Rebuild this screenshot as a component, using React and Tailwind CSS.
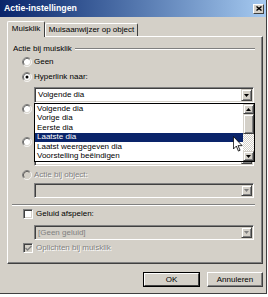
import React from 'react';

// Klassiek Windows-dialoogje "Actie-instellingen" met open keuzelijst

const Radio = ({ checked, disabled }) => (
  <svg width="10" height="10" viewBox="0 0 12 12" className="shrink-0">
    <circle cx="6" cy="6" r="4.5" fill={disabled ? '#d4d0c8' : '#fff'} />
    <path d="M9.89 2.11 A5.5 5.5 0 0 0 2.11 9.89" stroke="#808080" fill="none" />
    <path d="M9.89 2.11 A5.5 5.5 0 0 1 2.11 9.89" stroke="#fff" fill="none" />
    <path d="M9.18 2.82 A4.5 4.5 0 0 0 2.82 9.18" stroke="#404040" fill="none" />
    <path d="M9.18 2.82 A4.5 4.5 0 0 1 2.82 9.18" stroke="#d4d0c8" fill="none" />
    {checked && <circle cx="6" cy="6" r="1.8" fill="#000" />}
  </svg>
);

const Check = ({ checked, disabled }) => (
  <div
    className={`w-[10px] h-[10px] shrink-0 border-t border-l border-t-[#808080] border-l-[#808080] border-r border-b border-r-white border-b-white shadow-[inset_1px_1px_#404040,inset_-1px_-1px_#d4d0c8] flex items-center justify-center ${
      disabled ? 'bg-[#d4d0c8]' : 'bg-white'
    }`}
  >
    {checked && (
      <svg width="7" height="7" viewBox="0 0 7 7">
        <path d="M0.5 3 L2.5 5 L6.5 1" stroke={disabled ? '#808080' : '#000'} strokeWidth="1.4" fill="none" />
      </svg>
    )}
  </div>
);

const ArrowBtn = ({ up, disabled, noArrow }) => (
  <div className="w-[11px] h-full shrink-0 bg-[#d4d0c8] border-t border-l border-t-[#d4d0c8] border-l-[#d4d0c8] border-r border-b border-r-[#404040] border-b-[#404040] shadow-[inset_1px_1px_#fff,inset_-1px_-1px_#808080] flex items-center justify-center">
    {!noArrow && (
      <svg width="5" height="3" viewBox="0 0 5 3">
        <path d={up ? 'M0 3 L5 3 L2.5 0 Z' : 'M0 0 L5 0 L2.5 3 Z'} fill={disabled ? '#808080' : '#000'} />
      </svg>
    )}
  </div>
);

const Combo = ({ text, disabled, h = 'h-[16px]' }) => (
  <div
    className={`ml-[26px] w-[220px] ${h} shrink-0 flex p-[1px] border-t border-l border-t-[#808080] border-l-[#808080] border-r border-b border-r-white border-b-white shadow-[inset_1px_1px_#404040,inset_-1px_-1px_#d4d0c8] ${
      disabled ? 'bg-[#d4d0c8]' : 'bg-white'
    }`}
  >
    <div className={`flex-1 flex items-center pl-[2px] leading-none ${disabled ? 'text-[#808080]' : 'text-black'}`}>{text}</div>
    <ArrowBtn disabled={disabled} />
  </div>
);

const Etch = ({ className }) => (
  <div className={`h-[2px] border-t border-t-[#808080] border-b border-b-white ${className}`} />
);

const Option = ({ label, checked, disabled }) => (
  <div className="h-[10px] shrink-0 flex items-center pl-[14px] gap-[2px]">
    <Radio checked={checked} disabled={disabled} />
    {label && (
      <span className={`leading-none ${disabled ? 'text-[#808080] [text-shadow:1px_1px_0_#fff]' : ''}`}>{label}</span>
    )}
  </div>
);

const items = ['Volgende dia', 'Vorige dia', 'Eerste dia', 'Laatste dia', 'Laatst weergegeven dia', 'Voorstelling beëindigen'];

export default function App() {
  return (
    <div className="w-[268px] h-[297px] bg-white overflow-hidden font-['Liberation_Sans',Arial,sans-serif] text-[8px] text-black">
      <div className="w-[267px] h-[294px] bg-[#d4d0c8] border-r border-b border-r-[#404040] border-b-[#404040] flex flex-col">
        {/* titelbalk */}
        <div className="h-[17px] shrink-0 flex items-center justify-between pl-[4px] pr-[2px] bg-gradient-to-r from-[#0a246a] to-[#a6caf0]">
          <span className="text-white font-bold text-[8.75px] leading-none">Actie-instellingen</span>
          <div className="w-[11px] h-[10px] bg-[#d4d0c8] border-t border-l border-t-white border-l-white border-r border-b border-r-[#404040] border-b-[#404040] flex items-center justify-center">
            <svg width="6" height="5" viewBox="0 0 6 5">
              <path d="M0.5 0.5 L5.5 4.5 M5.5 0.5 L0.5 4.5" stroke="#000" strokeWidth="1.4" />
            </svg>
          </div>
        </div>

        {/* tabbladen */}
        <div className="mt-[4px] h-[15px] shrink-0 flex items-end ml-[7px]">
          <div className="relative z-10 -mb-[1px] h-[16px] w-[38px] bg-[#d4d0c8] border-t border-l border-t-white border-l-white border-r border-r-[#404040] rounded-t-[2px] flex items-center justify-center pb-[2px]">
            <span className="leading-none">Muisklik</span>
          </div>
          <div className="h-[13px] w-[93px] border-t border-l border-t-white border-l-white border-r border-r-[#404040] rounded-t-[2px] flex items-center justify-center">
            <span className="leading-none">Muisaanwijzer op object</span>
          </div>
        </div>

        {/* paneel */}
        <div className="relative ml-[7px] w-[256px] h-[228px] shrink-0 flex flex-col border-t border-l border-t-white border-l-white border-r border-b border-r-[#404040] border-b-[#404040] shadow-[inset_-1px_-1px_#808080]">
          <div className="mt-[7px] h-[10px] shrink-0 flex items-center pl-[5px] pr-[7px] gap-[3px]">
            <span className="leading-none">Actie bij muisklik</span>
            <Etch className="flex-1" />
          </div>
          <div className="mt-[3px]"><Option label="Geen" /></div>
          <div className="mt-[5px]"><Option label="Hyperlink naar:" checked /></div>
          <div className="mt-[5px]"><Combo text="Volgende dia" /></div>
          <div className="mt-[1px]"><Option /></div>
          <div className="mt-[4px] ml-[26px] w-[220px] h-[15px] flex gap-[4px]">
            <div className="flex-1 bg-white border-t border-l border-t-[#808080] border-l-[#808080]" />
            <div className="w-[50px] border-t border-l border-t-white border-l-white border-r border-b border-r-[#404040] border-b-[#404040]" />
          </div>
          <div className="mt-[4px]"><Option /></div>
          <div className="mt-[3px]"><Combo text="" /></div>
          <div className="mt-[4px]"><Option label="Actie bij object:" disabled /></div>
          <div className="mt-[3px]"><Combo text="" disabled h="h-[15px]" /></div>
          <Etch className="mt-[6px] ml-[4px] mr-[7px]" />
          <div className="mt-[3px] h-[10px] shrink-0 flex items-center pl-[15px] gap-[3px]">
            <Check />
            <span className="leading-none">Geluid afspelen:</span>
          </div>
          <div className="mt-[6px]"><Combo text="[Geen geluid]" disabled h="h-[15px]" /></div>
          <div className="mt-[3px] h-[10px] shrink-0 flex items-center pl-[15px] gap-[3px]">
            <Check checked disabled />
            <span className="leading-none text-[#808080] [text-shadow:1px_1px_0_#fff]">Oplichten bij muisklik</span>
          </div>

          {/* open keuzelijst */}
          <div className="absolute left-[26px] top-[66px] w-[221px] h-[59px] bg-white border border-black flex">
            <div className="flex-1 flex flex-col">
              {items.map((t, i) => (
                <div
                  key={t}
                  className={`h-[9.5px] flex items-center pl-[2px] leading-none ${
                    i === 3 ? 'bg-[#0a246a] text-white' : 'text-black'
                  }`}
                >
                  {t}
                </div>
              ))}
            </div>
            <div className="w-[11px] flex flex-col bg-[#ece9e2]">
              <div className="h-[10px]"><ArrowBtn up /></div>
              <div className="h-[20px]"><ArrowBtn noArrow /></div>
              <div className="flex-1 bg-[repeating-conic-gradient(#fff_0_25%,#d4d0c8_0_50%)] bg-[length:2px_2px]" />
              <div className="h-[10px]"><ArrowBtn /></div>
            </div>
          </div>

          {/* muisaanwijzer */}
          <svg className="absolute left-[225px] top-[99px]" width="10" height="16" viewBox="0 0 12 19">
            <path d="M0.5 0.5 L0.5 15.5 L4 12 L6.5 18 L8.5 17 L6 11.5 L11 11.5 Z" fill="#fff" stroke="#000" strokeWidth="1" />
          </svg>
        </div>

        {/* knoppen */}
        <div className="mt-[8px] h-[15px] shrink-0 flex justify-end gap-[7px] pr-[3px]">
          <div className="w-[57px] border border-black flex">
            <div className="flex-1 flex items-center justify-center border-t border-l border-t-white border-l-white border-r border-b border-r-[#404040] border-b-[#404040]">
              <span className="leading-none">OK</span>
            </div>
          </div>
          <div className="w-[56px] flex items-center justify-center border-t border-l border-t-white border-l-white border-r border-b border-r-[#404040] border-b-[#404040] shadow-[inset_-1px_-1px_#808080]">
            <span className="leading-none">Annuleren</span>
          </div>
        </div>
      </div>
    </div>
  );
}
